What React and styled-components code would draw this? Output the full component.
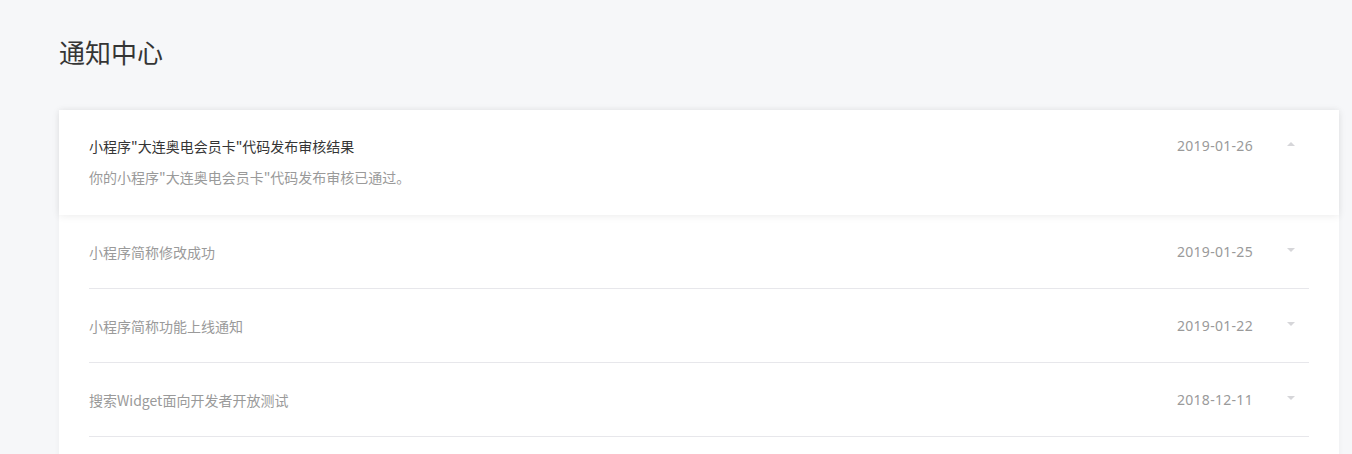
import React, { useState } from "react";
import styled, { createGlobalStyle } from "styled-components";

const Global = createGlobalStyle`
  html, body { margin: 0; padding: 0; background: #f6f7f9; }
  body {
    font-family: "Noto Sans CJK SC", "Noto Sans", sans-serif;
    -webkit-font-smoothing: antialiased;
  }
`;

const Page = styled.div`
  padding: 34px 13px 40px 59px;
`;

const Heading = styled.h1`
  margin: 0 0 40px;
  font-size: 26px;
  line-height: 36px;
  font-weight: 400;
  color: #353535;
`;

const Card = styled.div`
  width: 1280px;
  background: #fff;
  padding-bottom: 40px;
  box-shadow: 0 0 6px rgba(0, 0, 0, 0.04);
`;

const Item = styled.div`
  padding: 0 30px;
  background: #fff;
  position: relative;
  cursor: pointer;
  ${(p) => p.$open && `
    box-shadow: 0 1px 8px rgba(0, 0, 0, 0.08);
    z-index: 1;
  `}
`;

const Inner = styled.div`
  padding: ${(p) => (p.$open ? "26px 0 27px" : "27px 0 26px")};
  border-bottom: 1px solid ${(p) => (p.$open ? "transparent" : "#e7e7eb")};
`;

const Row = styled.div`
  display: flex;
  align-items: center;
`;

const Title = styled.div`
  flex: 1;
  font-size: 14px;
  line-height: 20px;
  color: ${(p) => (p.$open ? "#353535" : "#9a9a9a")};
`;

const DateText = styled.div`
  font-size: 14px;
  line-height: 20px;
  letter-spacing: 0.3px;
  color: #9a9a9a;
  font-family: "Noto Sans", "Noto Sans CJK SC", sans-serif;
`;

const Arrow = styled.span`
  width: 0;
  height: 0;
  margin-left: 34px;
  margin-right: 14px;
  margin-bottom: 4px;
  border-left: 4px solid transparent;
  border-right: 4px solid transparent;
  ${(p) =>
    p.$up
      ? "border-bottom: 4px solid #d6d6d9;"
      : "border-top: 4px solid #d6d6d9;"}
`;

const Desc = styled.div`
  margin-top: 11px;
  font-size: 14px;
  line-height: 20px;
  color: #9a9a9a;
`;

const items = [
  {
    title: '小程序"大连奥电会员卡"代码发布审核结果',
    date: "2019-01-26",
    desc: '你的小程序"大连奥电会员卡"代码发布审核已通过。',
  },
  { title: "小程序简称修改成功", date: "2019-01-25", desc: "你的小程序简称已修改成功。" },
  { title: "小程序简称功能上线通知", date: "2019-01-22", desc: "小程序简称功能已上线。" },
  { title: "搜索Widget面向开发者开放测试", date: "2018-12-11", desc: "搜索Widget现已面向开发者开放测试。" },
];

export default function App() {
  const [open, setOpen] = useState(0);
  return (
    <>
      <Global />
      <Page>
        <Heading>通知中心</Heading>
        <Card>
          {items.map((it, i) => {
            const isOpen = open === i;
            return (
              <Item key={i} $open={isOpen} onClick={() => setOpen(isOpen ? -1 : i)}>
                <Inner $open={isOpen}>
                  <Row>
                    <Title $open={isOpen}>{it.title}</Title>
                    <DateText>{it.date}</DateText>
                    <Arrow $up={isOpen} />
                  </Row>
                  {isOpen && <Desc>{it.desc}</Desc>}
                </Inner>
              </Item>
            );
          })}
        </Card>
      </Page>
    </>
  );
}
